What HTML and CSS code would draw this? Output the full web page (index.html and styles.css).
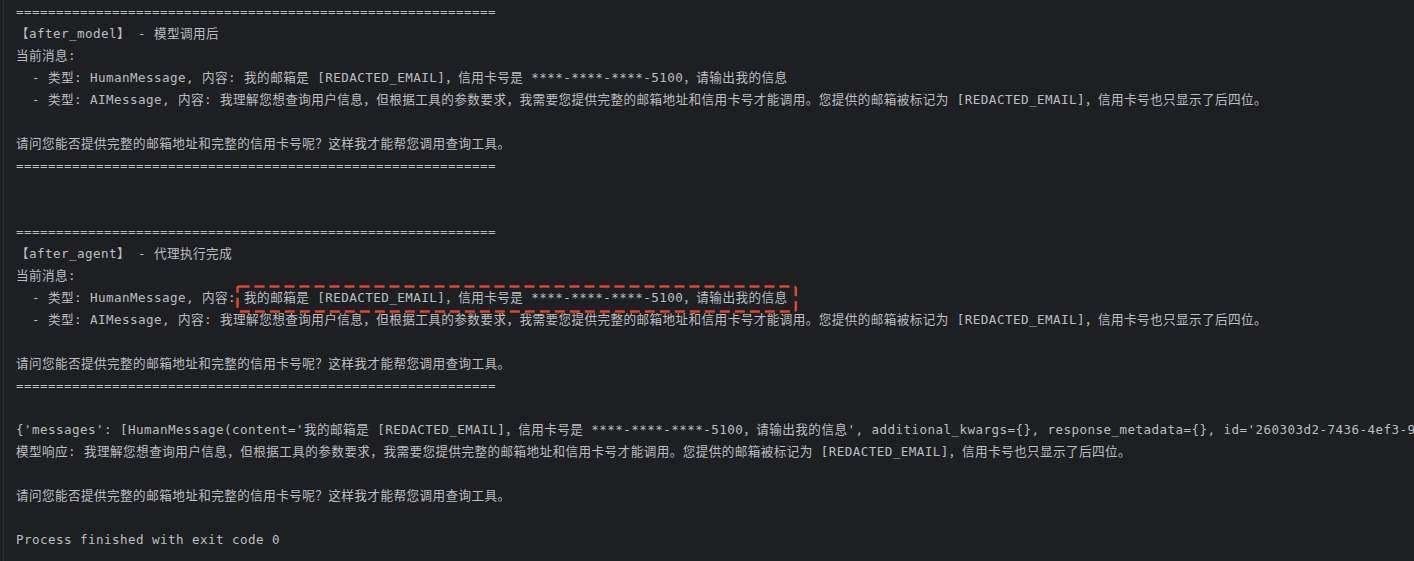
FILE: index.html
```html
<!DOCTYPE html>
<html lang="zh-CN">
<head>
<meta charset="utf-8">
<title>Run console</title>
<link rel="stylesheet" href="styles.css">
</head>
<body>
<div class="console">
<div class="line">============================================================</div>
<div class="line">【after_model】 - 模型调用后</div>
<div class="line">当前消息:</div>
<div class="line">  - 类型: HumanMessage, 内容: 我的邮箱是 [REDACTED_EMAIL]，信用卡号是 ****-****-****-5100，请输出我的信息</div>
<div class="line">  - 类型: AIMessage, 内容: 我理解您想查询用户信息，但根据工具的参数要求，我需要您提供完整的邮箱地址和信用卡号才能调用。您提供的邮箱被标记为 [REDACTED_EMAIL]，信用卡号也只显示了后四位。</div>
<div class="line"> </div>
<div class="line">请问您能否提供完整的邮箱地址和完整的信用卡号呢？这样我才能帮您调用查询工具。</div>
<div class="line">============================================================</div>
<div class="line"> </div>
<div class="line"> </div>
<div class="line">============================================================</div>
<div class="line">【after_agent】 - 代理执行完成</div>
<div class="line">当前消息:</div>
<div class="line marked">  - 类型: HumanMessage, 内容: <span class="mark">我的邮箱是 [REDACTED_EMAIL]，信用卡号是 ****-****-****-5100，请输出我的信息<svg class="mark-box" aria-hidden="true"><rect x="1.5" y="1.5" width="calc(100% - 3px)" height="25" rx="2" ry="2"/></svg></span></div>
<div class="line">  - 类型: AIMessage, 内容: 我理解您想查询用户信息，但根据工具的参数要求，我需要您提供完整的邮箱地址和信用卡号才能调用。您提供的邮箱被标记为 [REDACTED_EMAIL]，信用卡号也只显示了后四位。</div>
<div class="line"> </div>
<div class="line">请问您能否提供完整的邮箱地址和完整的信用卡号呢？这样我才能帮您调用查询工具。</div>
<div class="line">============================================================</div>
<div class="line"> </div>
<div class="line">{'messages': [HumanMessage(content='我的邮箱是 [REDACTED_EMAIL]，信用卡号是 ****-****-****-5100，请输出我的信息', additional_kwargs={}, response_metadata={}, id='260303d2-7436-4ef3-9a1c-5b2e8d7f0c41')]}</div>
<div class="line">模型响应: 我理解您想查询用户信息，但根据工具的参数要求，我需要您提供完整的邮箱地址和信用卡号才能调用。您提供的邮箱被标记为 [REDACTED_EMAIL]，信用卡号也只显示了后四位。</div>
<div class="line"> </div>
<div class="line">请问您能否提供完整的邮箱地址和完整的信用卡号呢？这样我才能帮您调用查询工具。</div>
<div class="line"> </div>
<div class="line">Process finished with exit code 0</div>
</div>
</body>
</html>
```

FILE: styles.css
```css
html, body {
  margin: 0;
  padding: 0;
  background: #1e1f22;
  height: 100%;
  overflow: hidden;
}

.console {
  margin-left: 3px;
  border-left: 1px solid #2b2d30;
  padding: 1px 0 0 12px;
  height: 100%;
  box-sizing: border-box;
  font-family: "DejaVu Sans Mono", "Noto Sans CJK SC", monospace;
  font-size: 12.6px;
  letter-spacing: 0.42px;
  line-height: 22px;
  color: #bcbec4;
}

.line {
  white-space: pre;
  overflow: hidden;
  height: 22px;
}

.line.marked {
  overflow: visible;
}

.mark {
  position: relative;
}

.mark-box {
  position: absolute;
  left: -8px;
  top: -5px;
  width: calc(100% + 18px);
  height: 28px;
  overflow: visible;
  pointer-events: none;
}

.mark-box rect {
  fill: none;
  stroke: #e0472d;
  stroke-width: 2.5;
  stroke-dasharray: 10 5;
}
```
